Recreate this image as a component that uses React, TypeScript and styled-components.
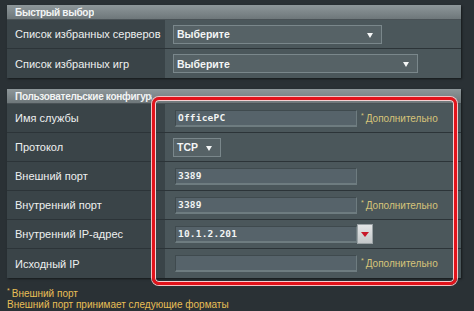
import styled, { createGlobalStyle } from "styled-components";

const GlobalStyle = createGlobalStyle`
  html, body {
    margin: 0;
    padding: 0;
    background: #2a3135;
    font-family: "Liberation Sans", Arial, sans-serif;
  }
`;

const Page = styled.div`
  position: relative;
  width: 474px;
  height: 311px;
  padding: 5px 0 0 7px;
  box-sizing: border-box;
  overflow: hidden;
`;

const Panel = styled.div<{ $gap?: number }>`
  width: 454px;
  margin-bottom: ${(p) => p.$gap ?? 0}px;
  background: #2f383c;
  box-shadow: 1px 1px 2px rgba(0, 0, 0, 0.5);
`;

const Header = styled.div`
  height: 15px;
  box-sizing: border-box;
  padding-left: 8px;
  display: flex;
  align-items: center;
  background: linear-gradient(#8e979a, #6e777a);
  color: #f2f4f4;
  font-size: 10px;
  font-weight: bold;
  letter-spacing: -0.3px;
  border-bottom: 1px solid #4a5256;
`;

const HeaderTitle = styled.span<{ $clip?: number }>`
  display: block;
  white-space: nowrap;
  overflow: hidden;
  max-width: ${(p) => (p.$clip ? `${p.$clip}px` : "none")};
`;

const Row = styled.div`
  display: grid;
  grid-template-columns: 158px 1fr;
  height: 29px;
  box-sizing: border-box;
  border-bottom: 1px solid #2c3438;
  &:last-child {
    border-bottom: none;
  }
`;

const Label = styled.div`
  display: flex;
  align-items: center;
  padding-left: 8px;
  background: #3a4448;
  color: #eef0f0;
  font-size: 11px;
`;

const Value = styled.div`
  display: flex;
  align-items: center;
  padding-left: 8px;
  background: #4b575b;
`;

const Select = styled.div<{ $w: number }>`
  position: relative;
  width: ${(p) => p.$w}px;
  height: 19px;
  box-sizing: border-box;
  background: #566266;
  border: 1px solid #7a878b;
  color: #f4f6f6;
  font-size: 10.5px;
  font-weight: bold;
  display: flex;
  align-items: center;
  padding-left: 3px;
  &::after {
    content: "";
    position: absolute;
    right: 8px;
    top: 7px;
    border-left: 3px solid transparent;
    border-right: 3px solid transparent;
    border-top: 5px solid #f4f6f6;
  }
`;

const Input = styled.div<{ $w?: number }>`
  width: ${(p) => p.$w ?? 182}px;
  height: 17px;
  margin-left: 2px;
  box-sizing: border-box;
  background: #56636a;
  border-top: 1px solid #3f4a4e;
  border-left: 1px solid #3f4a4e;
  border-bottom: 2px solid #6e7c80;
  border-right: 1px solid #6e7c80;
  color: #f2f4f4;
  font-family: "DejaVu Sans Mono", "Liberation Mono", monospace;
  font-size: 9.5px;
  font-weight: bold;
  letter-spacing: 0.2px;
  display: flex;
  align-items: center;
  padding-left: 2px;
`;

const Hint = styled.span`
  margin-left: 4px;
  color: #d6c47a;
  font-size: 10px;
  white-space: nowrap;
  sup {
    font-size: 7px;
    margin-right: 2px;
  }
`;

const DropButton = styled.div`
  width: 16px;
  height: 20px;
  box-sizing: border-box;
  background: linear-gradient(#e4e6e7, #c4c8ca);
  border: 1px solid #9aa2a5;
  display: flex;
  align-items: center;
  justify-content: center;
  &::after {
    content: "";
    border-left: 4px solid transparent;
    border-right: 4px solid transparent;
    border-top: 5px solid #c8182a;
  }
`;

const Footer = styled.div`
  margin-top: 7px;
  color: #e8bf55;
  font-size: 10px;
  line-height: 11px;
  sup {
    font-size: 7px;
    margin-right: 2px;
  }
`;

const Highlight = styled.div`
  position: absolute;
  left: 152px;
  top: 97px;
  width: 305px;
  height: 188px;
  box-sizing: border-box;
  border: 3px solid #e2131b;
  border-radius: 7px;
  box-shadow: 0 0 0 1px #f4c2c4, inset 0 0 0 1px #f6d0d2;
  pointer-events: none;
`;

type FieldRow = {
  label: string;
  value?: string;
  kind: "input" | "select" | "ip";
  hint?: boolean;
};

const fields: FieldRow[] = [
  { label: "Имя службы", value: "OfficePC", kind: "input", hint: true },
  { label: "Протокол", value: "TCP", kind: "select" },
  { label: "Внешний порт", value: "3389", kind: "input" },
  { label: "Внутренний порт", value: "3389", kind: "input", hint: true },
  { label: "Внутренний IP-адрес", value: "10.1.2.201", kind: "ip" },
  { label: "Исходный IP", value: "", kind: "input", hint: true },
];

const App = () => {
  return (
    <>
      <GlobalStyle />
      <Page>
        <Panel $gap={11}>
          <Header>
            <HeaderTitle>Быстрый выбор</HeaderTitle>
          </Header>
          <Row>
            <Label>Список избранных серверов</Label>
            <Value>
              <Select $w={209}>Выберите</Select>
            </Value>
          </Row>
          <Row>
            <Label>Список избранных игр</Label>
            <Value>
              <Select $w={245}>Выберите</Select>
            </Value>
          </Row>
        </Panel>

        <Panel>
          <Header>
            <HeaderTitle $clip={137}>Пользовательские конфигурации</HeaderTitle>
          </Header>
          {fields.map((f) => (
            <Row key={f.label}>
              <Label>{f.label}</Label>
              <Value>
                {f.kind === "select" ? (
                  <Select $w={48}>{f.value}</Select>
                ) : (
                  <Input>{f.value}</Input>
                )}
                {f.kind === "ip" && <DropButton />}
                {f.hint && (
                  <Hint>
                    <sup>*</sup>Дополнительно
                  </Hint>
                )}
              </Value>
            </Row>
          ))}
        </Panel>

        <Footer>
          <div>
            <sup>*</sup>Внешний порт
          </div>
          <div>Внешний порт принимает следующие форматы</div>
        </Footer>

        <Highlight />
      </Page>
    </>
  );
};

export default App;
